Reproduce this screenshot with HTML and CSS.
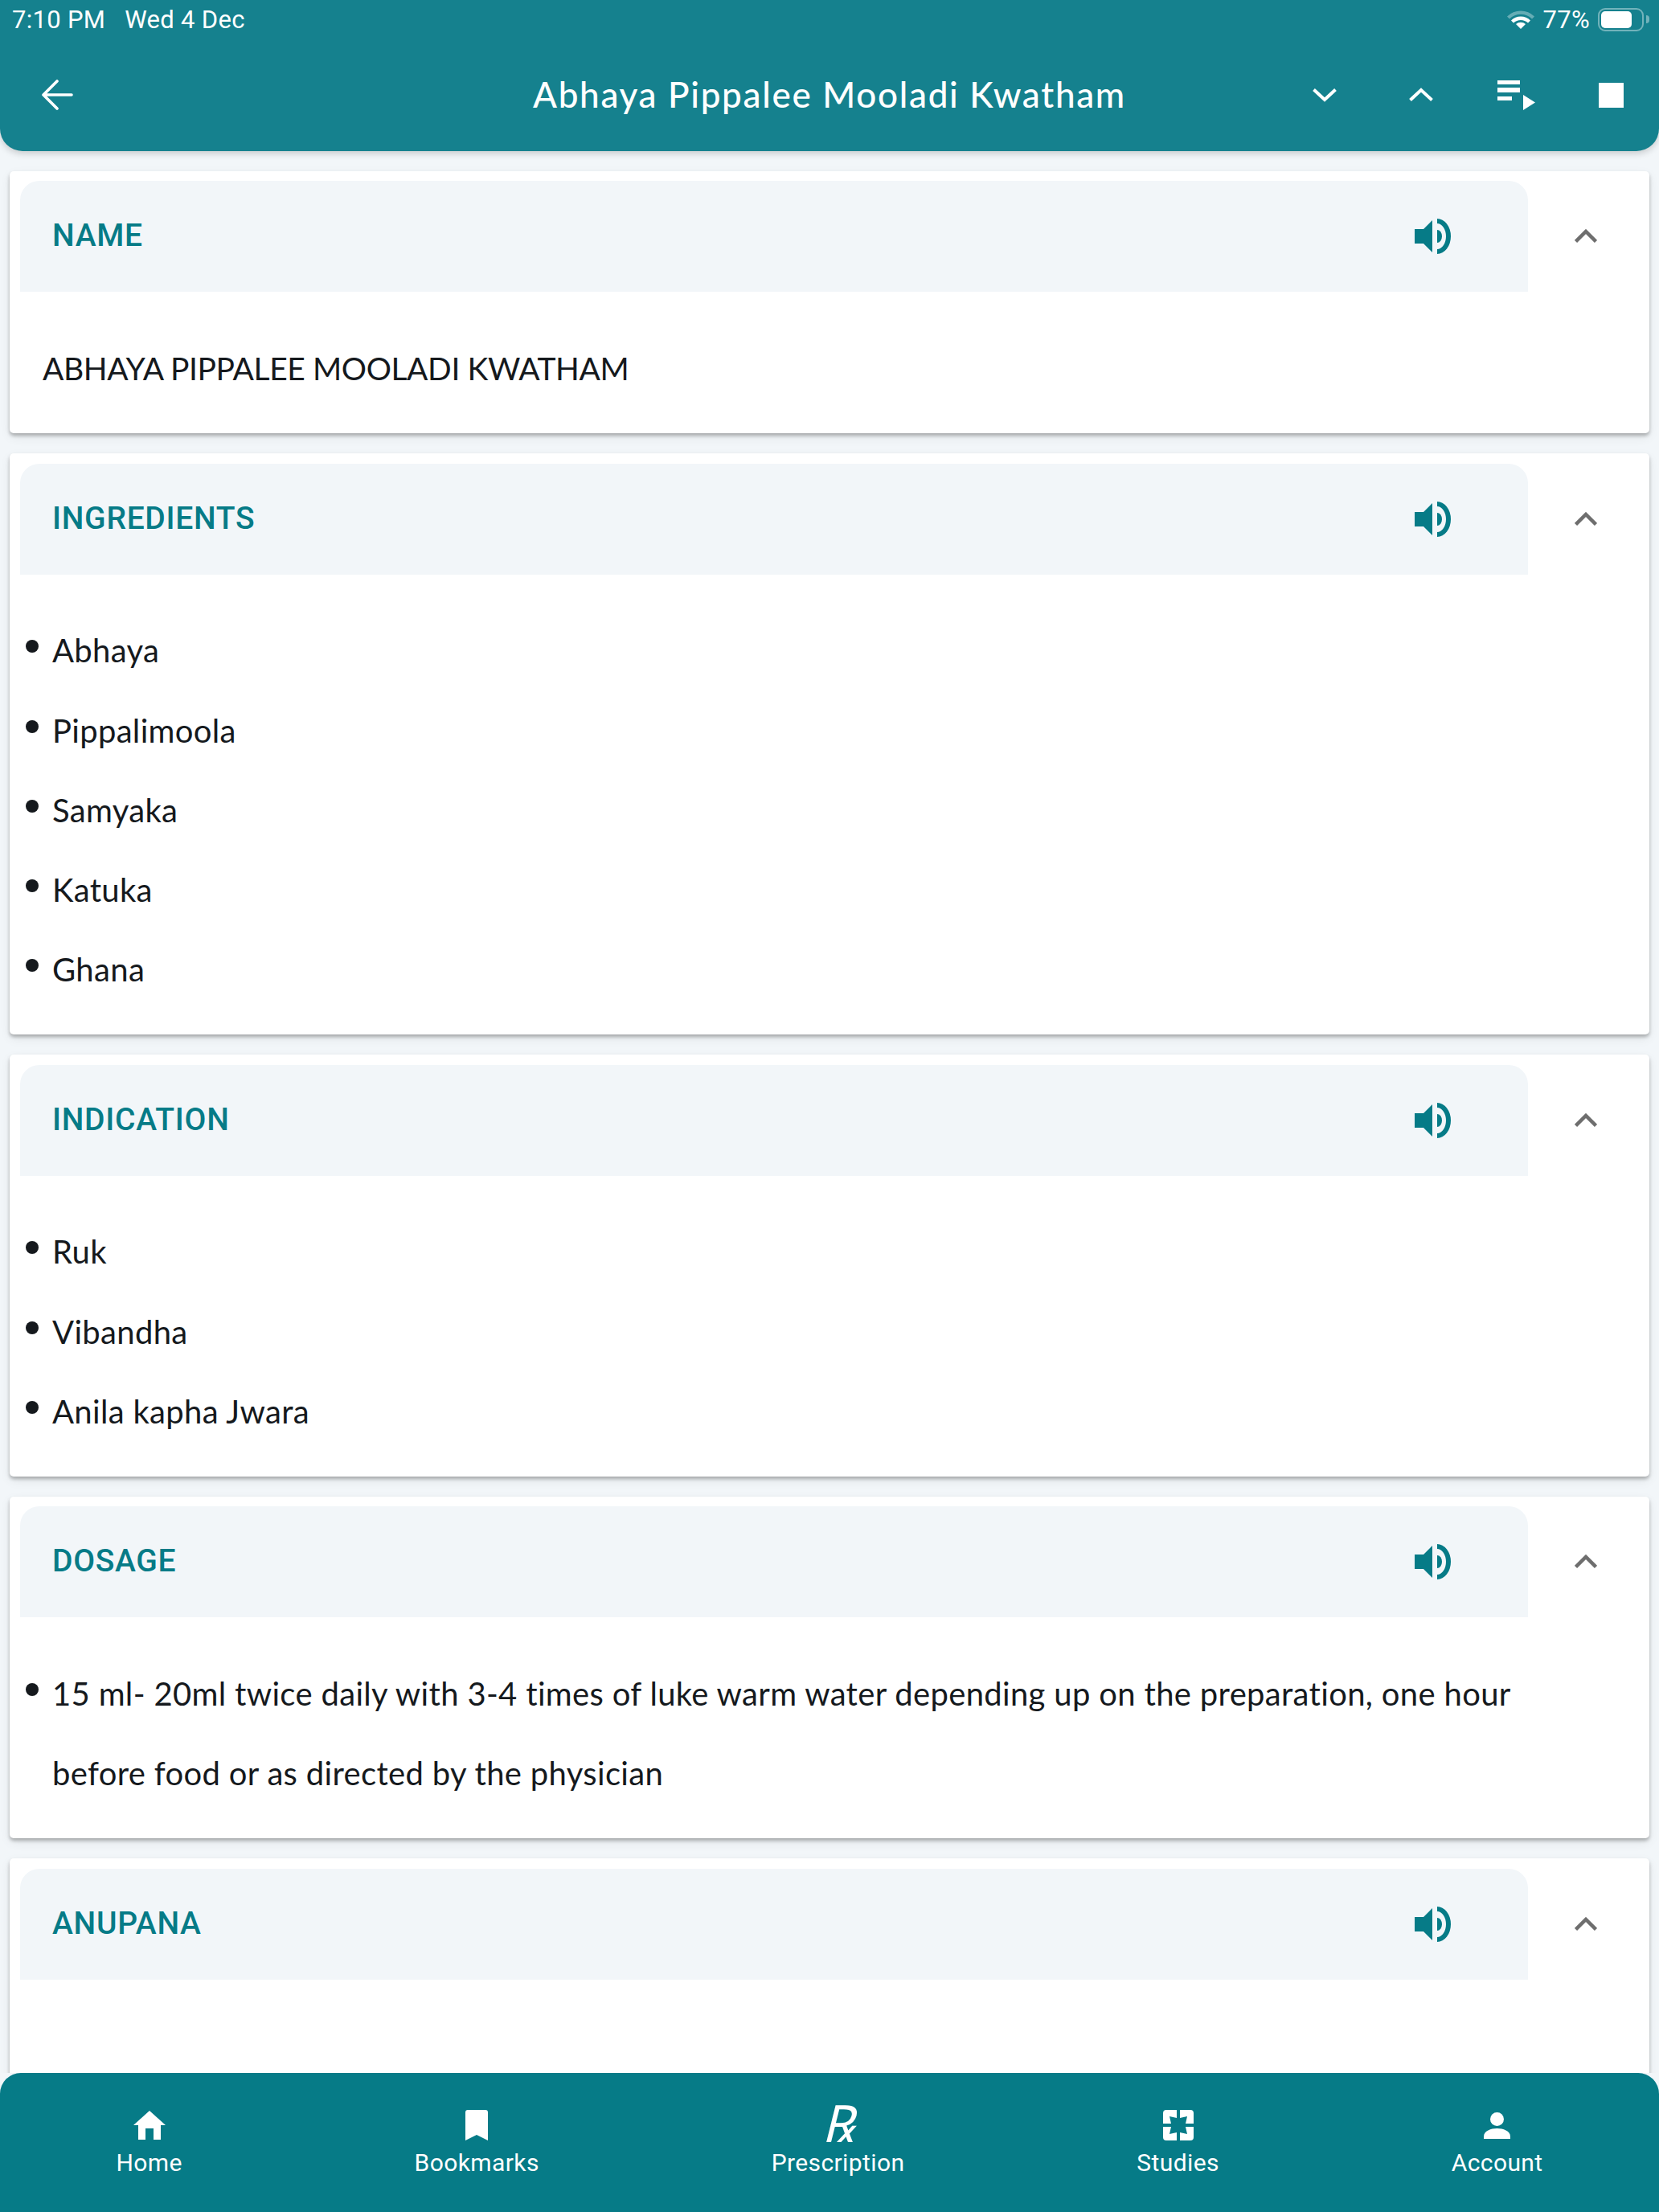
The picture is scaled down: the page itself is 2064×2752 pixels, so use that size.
FILE: index.html
```html
<!DOCTYPE html>
<html lang="en">
<head>
    <meta charset="UTF-8">
    <title>Abhaya Pippalee Mooladi Kwatham</title>
    <link rel="stylesheet" href="styles.css">
</head>
<body>
    <header class="top-bar">
        <div class="status-bar">
            <div class="status-left"><span>7:10 PM</span><span>Wed 4 Dec</span></div>
            <div class="status-right">
                <svg class="wifi-icon" viewBox="0 0 34 24" width="34" height="24">
                    <path d="M0 8.500a24 24 0 0 1 34 0l-3 3a20 20 0 0 0-28 0z" fill="#fff" opacity=".35"/>
                    <path d="M5 13.500a17 17 0 0 1 24 0l-3 3a13 13 0 0 0-18 0z" fill="#fff"/>
                    <path d="M17 24l-6-6a9 9 0 0 1 12 0z" fill="#fff"/>
                </svg>
                <span>77%</span>
                <div class="battery"><div class="battery-fill"></div></div>
                <div class="battery-nub"></div>
            </div>
        </div>
        <div class="tool-bar">
            <svg class="back-icon" viewBox="0 0 40 38" width="40" height="38" fill="none" stroke="#fff" stroke-width="3.6" stroke-linecap="round" stroke-linejoin="round">
                <path d="M38 19H3M20 2L3 19l17 17"/>
            </svg>
            <h1 class="page-title">Abhaya Pippalee Mooladi Kwatham</h1>
            <div class="tool-icons">
                <svg viewBox="0 0 30 18" width="30" height="18" fill="none" stroke="#fff" stroke-width="4"><path d="M1.500 2.500L15 15 28.500 2.500"/></svg>
                <svg class="tool-up" viewBox="0 0 30 18" width="30" height="18" fill="none" stroke="#fff" stroke-width="4"><path d="M1.500 15.500L15 3 28.500 15.500"/></svg>
                <svg class="tool-queue" viewBox="0 0 47 38" width="47" height="38" fill="#fff"><path d="M0 1h28v5H0zM0 10h28v6H0zM0 21h18v5H0zM32 19l15 9.500-15 9.500z"/></svg>
                <div class="stop-icon"></div>
            </div>
        </div>
    </header>

    <main class="content">
        <section class="card">
            <div class="card-head">
                <div class="card-panel">
                    <h2>NAME</h2>
                    <svg class="speak-icon" viewBox="0 0 46 44"><use href="#speaker"/></svg>
                </div>
                <svg class="fold-icon" viewBox="0 0 28 18"><path d="M1.500 15.500L14 3l12.500 12.500"/></svg>
            </div>
            <p class="plain-text">ABHAYA PIPPALEE MOOLADI KWATHAM</p>
        </section>

        <section class="card">
            <div class="card-head">
                <div class="card-panel">
                    <h2>INGREDIENTS</h2>
                    <svg class="speak-icon" viewBox="0 0 46 44"><use href="#speaker"/></svg>
                </div>
                <svg class="fold-icon" viewBox="0 0 28 18"><path d="M1.500 15.500L14 3l12.500 12.500"/></svg>
            </div>
            <ul class="item-list">
                <li>Abhaya</li>
                <li>Pippalimoola</li>
                <li>Samyaka</li>
                <li>Katuka</li>
                <li>Ghana</li>
            </ul>
        </section>

        <section class="card">
            <div class="card-head">
                <div class="card-panel">
                    <h2>INDICATION</h2>
                    <svg class="speak-icon" viewBox="0 0 46 44"><use href="#speaker"/></svg>
                </div>
                <svg class="fold-icon" viewBox="0 0 28 18"><path d="M1.500 15.500L14 3l12.500 12.500"/></svg>
            </div>
            <ul class="item-list">
                <li>Ruk</li>
                <li>Vibandha</li>
                <li>Anila kapha Jwara</li>
            </ul>
        </section>

        <section class="card">
            <div class="card-head">
                <div class="card-panel">
                    <h2>DOSAGE</h2>
                    <svg class="speak-icon" viewBox="0 0 46 44"><use href="#speaker"/></svg>
                </div>
                <svg class="fold-icon" viewBox="0 0 28 18"><path d="M1.500 15.500L14 3l12.500 12.500"/></svg>
            </div>
            <ul class="item-list">
                <li>15 ml- 20ml twice daily with 3-4 times of luke warm water depending up on the preparation, one hour before food or as directed by the physician</li>
            </ul>
        </section>

        <section class="card">
            <div class="card-head">
                <div class="card-panel">
                    <h2>ANUPANA</h2>
                    <svg class="speak-icon" viewBox="0 0 46 44"><use href="#speaker"/></svg>
                </div>
                <svg class="fold-icon" viewBox="0 0 28 18"><path d="M1.500 15.500L14 3l12.500 12.500"/></svg>
            </div>
        </section>
    </main>

    <nav class="bottom-nav">
        <div class="nav-item">
            <div class="nav-icon">
                <svg viewBox="0 0 40 36" width="40" height="36" fill="#fff"><path d="M20 0L40 18H34V36H25V22H15V36H6V18H0z"/></svg>
            </div>
            <span>Home</span>
        </div>
        <div class="nav-item">
            <div class="nav-icon">
                <svg viewBox="0 0 28 38" width="28" height="38" fill="#fff"><path d="M3 0h22a3 3 0 0 1 3 3v35L14 31 0 38V3a3 3 0 0 1 3-3z"/></svg>
            </div>
            <span>Bookmarks</span>
        </div>
        <div class="nav-item">
            <div class="nav-icon">
                <span class="rx-mark">&#8478;</span>
            </div>
            <span>Prescription</span>
        </div>
        <div class="nav-item">
            <div class="nav-icon">
                <svg viewBox="0 0 38 38" width="38" height="38" fill="#fff"><path d="M4 0H17V10L8 8L10 17H0V4A4 4 0 0 1 4 0zM21 0H34A4 4 0 0 1 38 4V17H28L30 8L21 10zM0 21H10L8 30L17 28V38H4A4 4 0 0 1 0 34zM21 28L30 30L28 21H38V34A4 4 0 0 1 34 38H21z"/></svg>
            </div>
            <span>Studies</span>
        </div>
        <div class="nav-item">
            <div class="nav-icon">
                <svg viewBox="0 0 33 33" width="33" height="33" fill="#fff"><circle cx="16.500" cy="8.500" r="8.500"/><path d="M0 33v-3C0 23 9 20 16.500 20S33 23 33 30v3z"/></svg>
            </div>
            <span>Account</span>
        </div>
    </nav>

    <svg class="icon-defs" width="0" height="0">
        <symbol id="speaker" viewBox="0 0 46 44">
            <path d="M0 13h11L22 2v40L11 31H0z" fill="#067b87"/>
            <path d="M28 0A17 22 0 0 1 28 44V38A11 16 0 0 0 28 6z" fill="#067b87"/>
            <path d="M28 14A6 8 0 0 1 28 30z" fill="#067b87"/>
        </symbol>
    </svg>
</body>
</html>
```

FILE: styles.css
```css
html, body {
    height: 100%;
}
body {
    display: flex;
    flex-direction: column;
    height: 2752px;
    margin: 0;
    overflow: hidden;
    background-color: #f2f6f9;
    font-family: "Lato", "Open Sans", sans-serif;
    color: #15191d;
}
.top-bar {
    flex: none;
    height: 188px;
    background-color: #15818e;
    border-radius: 0 0 28px 28px;
    box-shadow: 0 3px 8px rgba(0, 0, 0, 0.18);
    color: #fff;
    position: relative;
    z-index: 2;
}
.status-bar {
    display: flex;
    justify-content: space-between;
    align-items: center;
    height: 48px;
    padding: 0 12px 0 15px;
    font-family: "Roboto", sans-serif;
    font-size: 31px;
    letter-spacing: 0.3px;
}
.status-left {
    display: flex;
    gap: 24px;
}
.status-right {
    display: flex;
    align-items: center;
}
.wifi-icon {
    margin-right: 11px;
}
.battery {
    width: 57px;
    height: 29px;
    box-sizing: border-box;
    margin-left: 10px;
    padding: 2px;
    border: 2px solid rgba(255, 255, 255, 0.4);
    border-radius: 9px;
}
.battery-fill {
    width: 77%;
    height: 100%;
    background-color: #fff;
    border-radius: 5px;
}
.battery-nub {
    width: 4px;
    height: 10px;
    margin-left: 3px;
    background-color: rgba(255, 255, 255, 0.4);
    border-radius: 0 4px 4px 0;
}
.tool-bar {
    display: flex;
    align-items: center;
    height: 140px;
    box-sizing: border-box;
    padding: 0 44px 0 51px;
}
.page-title {
    flex: 1;
    margin: 0 0 3px;
    padding-left: 340px;
    font-size: 44px;
    font-weight: 500;
    letter-spacing: 1.7px;
    text-align: center;
    white-space: nowrap;
}
.tool-icons {
    display: flex;
    align-items: center;
}
.tool-up {
    margin-left: 90px;
}
.tool-queue {
    margin-left: 80px;
}
.stop-icon {
    width: 31px;
    height: 31px;
    margin-left: 79px;
    background-color: #fff;
}
.content {
    flex: 1;
    min-height: 0;
    overflow: hidden;
    padding: 24.500px 12px 0;
}
.card {
    margin-bottom: 25px;
    padding: 12.500px 0 0;
    background-color: #fff;
    border-radius: 5px;
    box-shadow: 0 3px 4px rgba(0, 0, 0, 0.28), 0 5px 14px rgba(0, 0, 0, 0.07);
}
.card:last-child {
    height: 400px;
    margin-bottom: 0;
}
.card-head {
    display: flex;
    align-items: center;
}
.card-panel {
    display: flex;
    align-items: center;
    justify-content: space-between;
    width: 1876px;
    height: 138px;
    box-sizing: border-box;
    margin-left: 13px;
    padding: 0 95px 0 40px;
    background-color: #f2f6f9;
    border-radius: 24px 24px 0 0;
}
.card-panel h2 {
    margin: 0 0 2px;
    font-family: "Roboto", sans-serif;
    font-size: 39px;
    font-weight: 500;
    letter-spacing: 0.7px;
    color: #067b87;
}
.speak-icon {
    width: 46px;
    height: 44px;
}
.fold-icon {
    width: 28px;
    height: 18px;
    margin-left: 58px;
    fill: none;
    stroke: #6e6e6e;
    stroke-width: 4.5;
}
.plain-text {
    margin: 0;
    padding: 45px 41px 31px;
    font-size: 39px;
    letter-spacing: -0.4px;
    line-height: 100.300px;
}
.item-list {
    margin: 0;
    padding: 45.500px 120px 31px 53px;
    list-style: none;
    font-size: 40px;
    letter-spacing: 0.33px;
    line-height: 99.200px;
}
.item-list li {
    position: relative;
}
.item-list li::before {
    content: "";
    position: absolute;
    left: -33px;
    top: 36px;
    width: 16px;
    height: 16px;
    border-radius: 50%;
    background-color: #15191d;
}
.bottom-nav {
    flex: none;
    display: flex;
    justify-content: space-around;
    height: 173px;
    box-sizing: border-box;
    padding-top: 46px;
    background-color: #067b87;
    border-radius: 26px 26px 0 0;
    color: #fff;
    font-family: "Roboto", sans-serif;
    font-size: 30px;
    letter-spacing: 0.4px;
    position: relative;
    z-index: 2;
}
.nav-item {
    display: flex;
    flex-direction: column;
    align-items: center;
}
.nav-icon {
    display: flex;
    align-items: center;
    justify-content: center;
    height: 38px;
    margin-bottom: 10px;
}
.rx-mark {
    font-family: "Liberation Serif", "DejaVu Serif", serif;
    font-style: italic;
    font-size: 64px;
    line-height: 38px;
}
.icon-defs {
    position: absolute;
}
```
